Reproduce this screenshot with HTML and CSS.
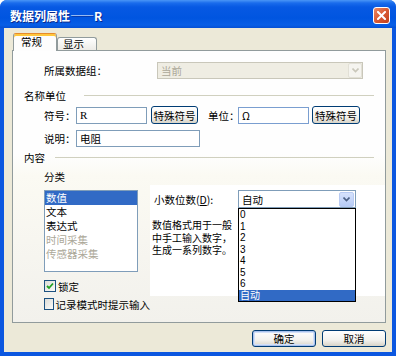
FILE: index.html
```html
<!DOCTYPE html>
<html lang="zh-CN">
<head>
    <meta charset="UTF-8">
    <title>数据列属性——R</title>
    <link rel="stylesheet" href="styles.css">
</head>
<body>

<div class="window">
    <div class="titlebar">
        <span class="title">数据列属性——R</span>
        <span class="close">
            <svg width="9" height="9" viewBox="0 0 9 9"><path d="M1 1 L8 8 M8 1 L1 8" stroke="#fff" stroke-width="2" stroke-linecap="square"/></svg>
        </span>
    </div>

    <div class="frame">
        <div class="tabs">
            <div class="tab active">常规</div>
            <div class="tab">显示</div>
        </div>

        <div class="page">
            <div class="row first-row">
                <span class="label wide">所属数据组：</span>
                <div class="combo disabled">
                    <span class="combo-text">当前</span>
                    <span class="combo-btn">
                        <svg width="7" height="5" viewBox="0 0 7 5"><path d="M0.5 0.5 L3.5 3.5 L6.5 0.5" fill="none" stroke="#c9c7ba" stroke-width="1.6"/></svg>
                    </span>
                </div>
            </div>

            <div class="group-title">
                <span>名称单位</span>
                <span class="group-line line-a"></span>
            </div>

            <div class="row symbol-row">
                <span class="label">符号：</span>
                <input class="field short serif" type="text" value="R">
                <button class="btn special">特殊符号</button>
                <span class="label unit">单位：</span>
                <input class="field short unit-field" type="text" value="Ω">
                <button class="btn special unit-btn">特殊符号</button>
            </div>

            <div class="row desc-row">
                <span class="label">说明：</span>
                <input class="field long" type="text" value="电阻">
            </div>

            <div class="group-title content-title">
                <span>内容</span>
                <span class="group-line line-b"></span>
            </div>

            <div class="row sub-title">分类</div>

            <div class="content">
                <div class="left-col">
                    <div class="listbox">
                        <div class="item selected">数值</div>
                        <div class="item">文本</div>
                        <div class="item">表达式</div>
                        <div class="item off">时间采集</div>
                        <div class="item off">传感器采集</div>
                    </div>
                    <label class="check first-check">
                        <span class="box">
                            <svg width="8" height="8" viewBox="0 0 8 8"><path d="M1 4 L3 6 L7 1.5" fill="none" stroke="#21a121" stroke-width="1.8"/></svg>
                        </span>
                        锁定
                    </label>
                    <label class="check">
                        <span class="box"></span>
                        记录模式时提示输入
                    </label>
                </div>

                <div class="format">
                    <div class="format-row">
                        <span class="label digits">小数位数(<u>D</u>):</span>
                        <div class="combo active-combo">
                            <span class="combo-text">自动</span>
                            <span class="combo-btn blue">
                                <svg width="7" height="5" viewBox="0 0 7 5"><path d="M0.5 0.5 L3.5 3.5 L6.5 0.5" fill="none" stroke="#4d6185" stroke-width="1.6"/></svg>
                            </span>
                            <div class="popup">
                                <div class="opt">0</div>
                                <div class="opt">1</div>
                                <div class="opt">2</div>
                                <div class="opt">3</div>
                                <div class="opt">4</div>
                                <div class="opt">5</div>
                                <div class="opt">6</div>
                                <div class="opt chosen">自动</div>
                            </div>
                        </div>
                    </div>
                    <p class="hint">数值格式用于一般<br>中手工输入数字，<br>生成一系列数字。</p>
                </div>
            </div>
        </div>

        <div class="footer">
            <button class="btn action default">确定</button>
            <button class="btn action">取消</button>
        </div>
    </div>
</div>

</body>
</html>
```

FILE: styles.css
```css
* {
    box-sizing: border-box;
}
body {
    margin: 0;
    background-color: #fff;
    font-family: "Noto Sans CJK SC", "Liberation Sans", sans-serif;
    font-size: 10.5px;
    color: #000;
}
.window {
    width: 396px;
    height: 356px;
    display: flex;
    flex-direction: column;
    background-color: #0b57e0;
    border-radius: 7px 7px 0 0;
}
.titlebar {
    height: 28px;
    display: flex;
    align-items: center;
    padding: 3px 6px 0 10px;
    border-radius: 7px 7px 0 0;
    background: linear-gradient(#4a96f6 0, #1a6cec 3px, #0759e3 7px, #0055e0 18px, #085ee6 25px, #0550d4 28px);
}
.title {
    flex: 1;
    color: #fff;
    font-size: 12px;
    font-weight: bold;
    text-shadow: 1px 1px #0a2a8c;
}
.close {
    width: 17px;
    height: 17px;
    display: flex;
    align-items: center;
    justify-content: center;
    border: 1px solid #fff;
    border-radius: 3px;
    background: linear-gradient(135deg, #ec8a66, #d85a33 50%, #c2401c);
}
.frame {
    flex: 1;
    margin: 0 4px 4px;
    padding: 5px 6px 0 8px;
    background-color: #ece9d8;
    display: flex;
    flex-direction: column;
}
.tabs {
    display: flex;
    align-items: flex-end;
    height: 18px;
    margin-bottom: -1px;
    padding-left: 1px;
}
.tab {
    height: 13px;
    width: 40px;
    margin-bottom: 1px;
    padding-left: 5px;
    line-height: 12px;
    border: 1px solid #919b9c;
    border-bottom: none;
    border-radius: 3px 3px 0 0;
    background: linear-gradient(#fff, #ecebe6);
}
.tab.active {
    position: relative;
    z-index: 1;
    height: 18px;
    width: 44px;
    margin-bottom: 0;
    padding-left: 7px;
    line-height: 16px;
    border-top: 1px solid #e68b2c;
    box-shadow: inset 0 2px #ffc73c;
    background: #fdfdfd;
}
.page {
    height: 273px;
    border: 1px solid #919b9c;
    background: linear-gradient(#fefefe 0%, #fefefe 38%, #fbfaf3 46%, #f2f1ec 100%);
}
.row {
    display: flex;
    align-items: center;
    padding-left: 31px;
}
.label {
    width: 32px;
    white-space: nowrap;
}
.label.wide {
    width: 113px;
}
.first-row {
    margin-top: 11px;
    height: 17px;
}
.combo {
    position: relative;
    display: flex;
    align-items: center;
    height: 17px;
    width: 206px;
    border: 1px solid #c9c7ba;
    background-color: #efede3;
}
.combo-text {
    flex: 1;
    padding-left: 3px;
}
.combo.disabled .combo-text {
    color: #aca899;
}
.combo-btn {
    width: 14px;
    height: 15px;
    display: flex;
    align-items: center;
    justify-content: center;
    border: 1px solid #e2e0d6;
    border-radius: 2px;
    background-color: #f5f4ef;
}
.group-title {
    display: flex;
    align-items: center;
    height: 14px;
    margin-top: 9px;
    padding-left: 11px;
}
.group-line {
    flex: 1;
    height: 1px;
    margin-right: 11px;
    background-color: #d0d0bf;
}
.line-a {
    margin-left: 18px;
}
.line-b {
    margin-left: 10px;
}
.content-title {
    margin-top: 3px;
}
.symbol-row {
    margin-top: 4px;
    height: 18px;
}
.desc-row {
    margin-top: 5px;
    height: 18px;
}
.field {
    height: 17px;
    padding: 0 3px;
    border: 1px solid #7f9db9;
    background-color: #fff;
    font-family: "Noto Sans CJK SC", sans-serif;
    font-size: 10.5px;
    outline: none;
}
.field.serif {
    font-family: "Liberation Serif", serif;
    font-size: 11px;
}
.field.short {
    width: 71px;
}
.field.long {
    width: 124px;
}
.unit {
    width: 30px;
    margin-left: 10px;
}
.unit-field {
    border-color: #7a9ed0;
}
.btn {
    padding: 0;
    border: 1px solid #003c74;
    border-radius: 3px;
    background: linear-gradient(#fff 0%, #f3f2ee 60%, #d8d4c8 100%);
    font-family: "Noto Sans CJK SC", sans-serif;
    font-size: 10.5px;
    color: #000;
}
.special {
    width: 47px;
    height: 18px;
    margin-left: 4px;
}
.unit-btn {
    width: 48px;
    margin-left: 3px;
}
.sub-title {
    margin-top: 5px;
    height: 14px;
}
.content {
    display: flex;
    margin-top: 2px;
}
.left-col {
    width: 137px;
    padding-left: 31px;
}
.listbox {
    width: 94px;
    height: 82px;
    margin-top: 5px;
    border: 1px solid #7f9db9;
    background-color: #fff;
}
.item {
    height: 14px;
    line-height: 13px;
    padding-left: 1px;
    white-space: nowrap;
}
.item.selected {
    background-color: #316ac5;
    color: #fff;
}
.item.off {
    color: #aca899;
}
.check {
    display: flex;
    align-items: center;
    gap: 2px;
    height: 12px;
    margin-top: 6px;
    white-space: nowrap;
}
.first-check {
    margin-top: 8px;
}
.box {
    width: 12px;
    height: 12px;
    display: flex;
    align-items: center;
    justify-content: center;
    border: 1px solid #1c5180;
    background: linear-gradient(135deg, #dcdcd7, #fbfbf9);
}
.format {
    flex: 1;
    height: 111px;
    background-color: #fff;
}
.format-row {
    display: flex;
    align-items: center;
    margin-top: 5px;
    padding-left: 4px;
    height: 18px;
}
.label.digits {
    width: 84px;
}
.active-combo {
    width: 118px;
    height: 18px;
    border-color: #7f9db9;
    background-color: #fff;
}
.combo-btn.blue {
    width: 15px;
    height: 15px;
    margin-right: 1px;
    border-color: #b9cbf3;
    background: linear-gradient(#d6e2fc, #b7cbf6);
}
.popup {
    position: absolute;
    top: 17px;
    left: -1px;
    z-index: 2;
    width: 118px;
    height: 94px;
    border: 1px solid #000;
    background-color: #fff;
    font-family: "Liberation Sans", "Noto Sans CJK SC", sans-serif;
    font-size: 10px;
}
.opt {
    height: 11.5px;
    line-height: 11.5px;
    padding-left: 1px;
}
.opt.chosen {
    background-color: #316ac5;
    color: #fff;
}
.hint {
    width: 86px;
    margin: 12px 0 0;
    padding-left: 2px;
    font-family: "Liberation Sans", "Noto Sans CJK SC", sans-serif;
    font-size: 10px;
    line-height: 12.5px;
    white-space: nowrap;
}
.footer {
    display: flex;
    justify-content: flex-end;
    gap: 6px;
    padding-top: 7px;
}
.action {
    width: 64px;
    height: 17px;
}
.action.default {
    box-shadow: inset 0 0 0 1px #a9c2ee, inset 0 0 0 2px #d3e0f7;
}
```
